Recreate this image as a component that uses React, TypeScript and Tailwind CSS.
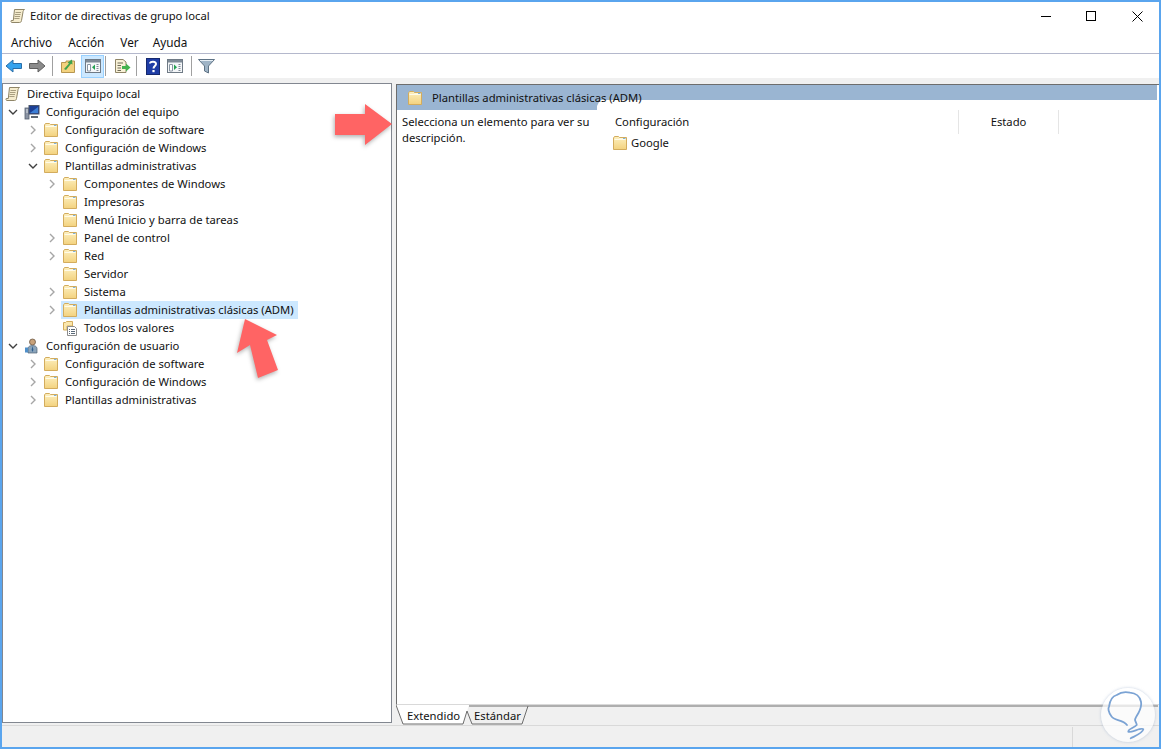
import type { ReactNode } from 'react';

function Folder({ className = '' }: { className?: string }) {
  return (
    <svg width="16" height="16" viewBox="0 0 16 16" className={`shrink-0 ${className}`}>
      <defs>
        <linearGradient id="folderFill" x1="0" y1="0" x2="0" y2="1">
          <stop offset="0" stopColor="#fdf0c0" />
          <stop offset="1" stopColor="#f3d27e" />
        </linearGradient>
      </defs>
      <path d="M1.5 3V14.5H14.5V2.5H7.5L6.5 1.5H2.5Z" fill="url(#folderFill)" stroke="#d3ac5d" />
      <path d="M2.5 4.5H13.5" stroke="#fffbe8" />
      <path d="M7.5 3H14V4H7Z" fill="#fff6d4" />
      <path d="M11 3.5H13.5" stroke="#7fb2dc" />
    </svg>
  );
}

function Scroll({ className = '' }: { className?: string }) {
  return (
    <svg width="16" height="16" viewBox="0 0 16 16" className={`shrink-0 ${className}`}>
      <path d="M4.5 1.5H14.5C13.5 2.5 13 3 13 4L11.5 12.5C11.4 13.8 10.6 14.5 9.5 14.5H2C1 14.5 .8 13.6 1.2 12.5H3.3Z" fill="#f5ecce" stroke="#8f8567" />
      <path d="M5.5 4.5H11M5 6.5H10.5M4.6 8.5H10M4.3 10.5H9.5" stroke="#a89e80" />
    </svg>
  );
}

function Chevron({ open }: { open?: boolean }) {
  return (
    <svg width="10" height="10" viewBox="0 0 10 10" className="shrink-0">
      {open ? (
        <path d="M1 3L5 7L9 3" fill="none" stroke="#404040" strokeWidth="1.4" />
      ) : (
        <path d="M3 1L7 5L3 9" fill="none" stroke="#a6a6a6" strokeWidth="1.4" />
      )}
    </svg>
  );
}

function Computer() {
  return (
    <svg width="16" height="16" viewBox="0 0 16 16" className="shrink-0">
      <rect x="1" y="4" width="4" height="11" fill="#8a93a3" stroke="#55606f" strokeWidth="0.8" />
      <path d="M2 6H4M2 8H4" stroke="#dfe4ea" />
      <rect x="5" y="1.5" width="10" height="8.5" fill="#1c3f94" stroke="#4a5568" />
      <path d="M6 9L14 3V9Z" fill="#3d7fd6" />
      <path d="M7 12H14V14H7Z" fill="#5d6672" />
    </svg>
  );
}

function UserIcon() {
  return (
    <svg width="16" height="16" viewBox="0 0 16 16" className="shrink-0">
      <circle cx="8.5" cy="4" r="3" fill="#c9a27a" stroke="#5d4a38" strokeWidth="0.7" />
      <path d="M4 15V10.5C4 8.5 6 7.5 8.5 7.5S13 8.5 13 10.5V15Z" fill="#8aa4bb" stroke="#4f6274" strokeWidth="0.7" />
      <path d="M1 9.5H4V14.5H1Z" fill="#4f8fc9" />
      <path d="M8.5 8L7.6 12L8.5 14L9.4 12Z" fill="#2f5f8f" />
    </svg>
  );
}

function AllSettings() {
  return (
    <svg width="16" height="16" viewBox="0 0 16 16" className="shrink-0">
      <path d="M1.5 2.5H3.5L4.5 1.5H10.5V6H5V10H1.5Z" fill="#fbe7ac" stroke="#d3ac5d" />
      <path d="M5.5 6.5H12.5L14.5 8.5V15.5H5.5Z" fill="#ffffff" stroke="#8c8c8c" />
      <path d="M7 9.5H8M9 9.5H13M7 11.5H8M9 11.5H13M7 13.5H8M9 13.5H13" stroke="#5b6a7a" />
    </svg>
  );
}

type RowProps = {
  level: number;
  chevron?: 'open' | 'closed';
  icon: ReactNode;
  label: string;
  selected?: boolean;
};

function TreeRow({ level, chevron, icon, label, selected }: RowProps) {
  const pad = ['pl-[1px]', 'pl-[5px]', 'pl-[25px]', 'pl-[44px]'][level];
  return (
    <div className={`flex h-[18px] items-center ${pad}`}>
      {level > 0 && (
        <span className={`flex shrink-0 justify-start ${level === 1 ? 'w-[15px]' : 'w-[14px]'}`}>
          {chevron && <Chevron open={chevron === 'open'} />}
        </span>
      )}
      <span className={`flex h-[18px] items-center pl-[1px] pr-[4px] ${selected ? 'bg-[#cce8ff]' : ''}`}>
        {icon}
        <span className="ml-[6px] whitespace-nowrap">{label}</span>
      </span>
    </div>
  );
}

function ToolSep({ className = '' }: { className?: string }) {
  return <div className={`h-[20px] w-px bg-[#a0a0a0] ${className}`} />;
}

function ToolBtn({ children, active }: { children: ReactNode; active?: boolean }) {
  return (
    <div
      className={`flex h-[23px] w-[23px] items-center justify-center ${active ? 'border border-[#99d1ff] bg-[#cce8ff]' : ''}`}
    >
      {children}
    </div>
  );
}

function PaneIcon({ mode }: { mode: 'left' | 'right' }) {
  return (
    <svg width="16" height="16" viewBox="0 0 16 16">
      <rect x="0.5" y="1.5" width="15" height="13" fill="#f4f6f8" stroke="#6f7a85" />
      <rect x="1" y="2" width="14" height="2.5" fill="#7e8a96" />
      <path d="M2.5 6.5H5.5V13H2.5Z" fill="#fff" stroke="#8a96a3" />
      <path d="M11.5 6.5H13.5M11.5 8.5H13.5M11.5 10.5H13.5M11.5 12.5H13.5" stroke="#7e8a96" />
      {mode === 'left' ? <path d="M10 6.5V12L7 9.2Z" fill="#22a050" /> : <path d="M7 6.5V12L10 9.2Z" fill="#22a050" />}
    </svg>
  );
}

export default function App() {
  return (
    <div className="relative flex h-[749px] w-[1161px] flex-col overflow-hidden border-2 border-[#5aa5ee] bg-white font-['Noto_Sans',sans-serif] text-[11.25px] leading-[18px] text-[#111111]">
      {/* Title bar */}
      <div className="flex h-[28px] shrink-0 items-center pl-[8px]">
        <Scroll />
        <span className="ml-[4px]">Editor de directivas de grupo local</span>
        <div className="ml-auto flex items-center">
          <div className="flex w-[42px] justify-center">
            <div className="h-px w-[10px] bg-black" />
          </div>
          <div className="flex w-[48px] justify-center">
            <div className="h-[10px] w-[10px] border border-black" />
          </div>
          <div className="flex w-[44px] justify-center">
            <svg width="11" height="11" viewBox="0 0 11 11">
              <path d="M.5 .5L10.5 10.5M10.5 .5L.5 10.5" stroke="#000" />
            </svg>
          </div>
        </div>
      </div>

      {/* Menu */}
      <div className="flex h-[24px] shrink-0 items-center gap-[16px] border-b border-[#b4b8cc] pl-[9px] text-[11.75px]">
        <span>Archivo</span>
        <span>Acción</span>
        <span className="-mr-[2px]">Ver</span>
        <span>Ayuda</span>
      </div>

      {/* Toolbar */}
      <div className="flex h-[24px] shrink-0 items-center">
        <ToolBtn>
          <svg width="18" height="16" viewBox="0 0 18 16">
            <path d="M1 8L8 2V5.5H16.5V10.5H8V14Z" fill="#36a3ee" stroke="#2a6ea8" />
          </svg>
        </ToolBtn>
        <ToolBtn>
          <svg width="18" height="16" viewBox="0 0 18 16">
            <path d="M17 8L10 2V5.5H1.5V10.5H10V14Z" fill="#8b8b8b" stroke="#5f5f5f" />
          </svg>
        </ToolBtn>
        <ToolSep className="ml-[4px] mr-[3px]" />
        <ToolBtn>
          <svg width="16" height="16" viewBox="0 0 16 16">
            <path d="M1.5 4.5H6V3H14.5V14.5H1.5Z" fill="#f3d27e" stroke="#b79650" />
            <path d="M4 11L9 5.5L7.5 4.5L12 1.5L12.5 6.5L11 5.8L6 12Z" fill="#3fa34d" />
          </svg>
        </ToolBtn>
        <div className="w-[2px]" />
        <ToolBtn active>
          <PaneIcon mode="left" />
        </ToolBtn>
        <ToolSep className="ml-[1px] mr-[5px]" />
        <ToolBtn>
          <svg width="17" height="16" viewBox="0 0 17 16">
            <path d="M1.5 1.5H9L12 4V14.5H1.5Z" fill="#f8f1d6" stroke="#8f8567" />
            <path d="M3.5 5H9M3.5 7.5H7M3.5 10H7M3.5 12.5H7" stroke="#6f6a58" />
            <path d="M8 8H12V5.5L16.5 9.5L12 13.5V11H8Z" fill="#44b34f" />
          </svg>
        </ToolBtn>
        <ToolSep className="ml-[2px] mr-[4px]" />
        <ToolBtn>
          <svg width="14" height="17" viewBox="0 0 14 17">
            <rect x="0.5" y="0.5" width="13" height="16" fill="#1f3da6" stroke="#16296e" />
            <path d="M4 5.5C4 3 10 3 10 6C10 8 7.5 8 7.5 10.5" fill="none" stroke="#fff" strokeWidth="2" />
            <rect x="6.4" y="12" width="2.2" height="2.2" fill="#fff" />
          </svg>
        </ToolBtn>
        <div className="-ml-[1px]" />
        <ToolBtn>
          <PaneIcon mode="right" />
        </ToolBtn>
        <ToolSep className="ml-[5px] mr-[3px]" />
        <ToolBtn>
          <svg width="17" height="16" viewBox="0 0 17 16">
            <path d="M.5 1.5H16.5L10.5 8V15L6.5 13V8Z" fill="#9fb4c6" stroke="#5f7385" />
            <path d="M2 2.5H15" stroke="#e6eef4" />
          </svg>
        </ToolBtn>
      </div>

      {/* Panes */}
      <div className="flex min-h-0 flex-1 gap-[4px] border-t-[5px] border-[#f0f0f0] bg-[#f0f0f0]">
        <div className="mb-[2px] w-[390px] shrink-0 border border-[#828790] bg-white pt-[1px]">
          <TreeRow level={0} icon={<Scroll />} label="Directiva Equipo local" />
          <TreeRow level={1} chevron="open" icon={<Computer />} label="Configuración del equipo" />
          <TreeRow level={2} chevron="closed" icon={<Folder />} label="Configuración de software" />
          <TreeRow level={2} chevron="closed" icon={<Folder />} label="Configuración de Windows" />
          <TreeRow level={2} chevron="open" icon={<Folder />} label="Plantillas administrativas" />
          <TreeRow level={3} chevron="closed" icon={<Folder />} label="Componentes de Windows" />
          <TreeRow level={3} icon={<Folder />} label="Impresoras" />
          <TreeRow level={3} icon={<Folder />} label="Menú Inicio y barra de tareas" />
          <TreeRow level={3} chevron="closed" icon={<Folder />} label="Panel de control" />
          <TreeRow level={3} chevron="closed" icon={<Folder />} label="Red" />
          <TreeRow level={3} icon={<Folder />} label="Servidor" />
          <TreeRow level={3} chevron="closed" icon={<Folder />} label="Sistema" />
          <TreeRow level={3} chevron="closed" icon={<Folder />} label="Plantillas administrativas clásicas (ADM)" selected />
          <TreeRow level={3} icon={<AllSettings />} label="Todos los valores" />
          <TreeRow level={1} chevron="open" icon={<UserIcon />} label="Configuración de usuario" />
          <TreeRow level={2} chevron="closed" icon={<Folder />} label="Configuración de software" />
          <TreeRow level={2} chevron="closed" icon={<Folder />} label="Configuración de Windows" />
          <TreeRow level={2} chevron="closed" icon={<Folder />} label="Plantillas administrativas" />
        </div>

        <div className="mt-[1px] flex min-w-0 flex-1 flex-col">
          <div className="flex min-h-0 flex-1 flex-col border-l border-t border-b border-[#6d6d6d] border-b-[#d9d9d9] bg-white">
            <div className="relative flex h-[25px] shrink-0 items-center pl-[10px]">
              <div className="absolute inset-0 mr-[2px] bg-[#9ab5d2]" />
              <div className="absolute bottom-0 left-[200px] right-0 h-[10px] bg-white [clip-path:polygon(3px_0,100%_0,100%_100%,0_100%,0_6px)]" />
              <Folder className="relative" />
              <span className="relative ml-[9px]">Plantillas administrativas clásicas (ADM)</span>
            </div>
            <div className="flex min-h-0 flex-1">
              <div className="w-[210px] shrink-0 pl-[5px] pr-[3px] pt-[4px] leading-[16px]">
                Selecciona un elemento para ver su descripción.
              </div>
              <div className="flex-1">
                <div className="flex h-[24px] items-stretch">
                  <div className="flex w-[352px] items-center border-r border-[#e5e5e5] pl-[8px]">Configuración</div>
                  <div className="flex w-[100px] items-center justify-center border-r border-[#e5e5e5]">Estado</div>
                </div>
                <div className="flex h-[18px] items-center pl-[5px]">
                  <Folder />
                  <span className="ml-[3px]">Google</span>
                </div>
              </div>
            </div>
          </div>
          {/* Tabs */}
          <div className="relative flex h-[20px] shrink-0 items-center pl-[11px] pt-[2px]">
            <svg width="762" height="20" viewBox="0 0 762 20" className="absolute left-0 top-0">
              <path d="M0 0L7 19H67L73 0Z" fill="#ffffff" />
              <path d="M0 0L7 19H67L71 6L76 19H126L132 1M73 1H762" fill="none" stroke="#6d6d6d" />
            </svg>
            <span className="relative w-[67px]">Extendido</span>
            <span className="relative">Estándar</span>
          </div>
        </div>
      </div>

      {/* Status bar */}
      <div className="flex h-[22px] shrink-0 border-t border-[#d9d9d9] bg-[#f0f0f0]">
        <div className="ml-auto mt-[1px] w-[87px] border-l border-[#d9d9d9]" />
      </div>

      {/* Annotations */}
      <svg width="62" height="44" viewBox="0 0 62 44" className="absolute left-[331px] top-[100px] drop-shadow-[-1px_2px_2px_rgba(0,0,0,0.3)]">
        <path d="M2 12H32V2L59 22L32 43V33H2Z" fill="#ff6464" />
      </svg>
      <svg width="50" height="70" viewBox="0 0 50 70" className="absolute left-[230px] top-[313px] drop-shadow-[-1px_2px_2px_rgba(0,0,0,0.3)]">
        <path d="M13 4L45 20L35 25L46 55L26 63L18 30L5 38Z" fill="#ff6464" />
      </svg>

      {/* Watermark */}
      <div className="absolute left-[1099px] top-[686px] h-[54px] w-[54px] rounded-full bg-white/70 shadow-[0_0_3px_rgba(150,170,200,0.6)]">
        <svg width="54" height="54" viewBox="0 0 54 54">
          <path
            d="M26 37C22 31 13 33 10.7 28.7C7 24 7 20 8 18.7C9 11 12 8 15.7 7C20 4 26 4 29 4.7C35 5 39 9 40 13.7C41 18 39 22 37.3 25.3C35 29 34 31 34 32C35 35 36 36 35.7 37C33 40 27 41 27.3 43.7C30 45 41 39 42.3 41.3C42 45 34 48 29.7 50.3"
            fill="none"
            stroke="#7ba3d4"
            strokeWidth="1.8"
            strokeLinecap="round"
          />
        </svg>
      </div>
    </div>
  );
}
